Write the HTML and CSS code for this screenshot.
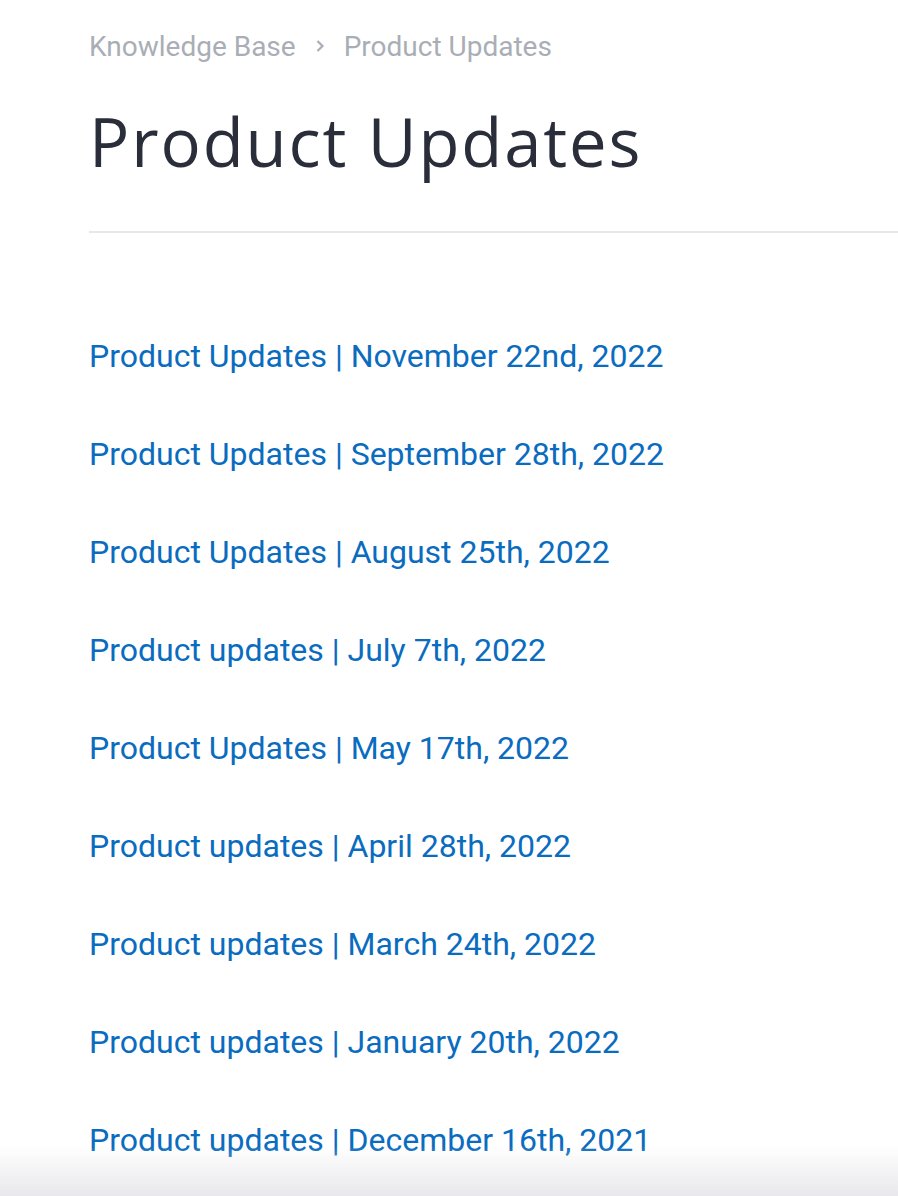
FILE: index.html
```html
<!DOCTYPE html>
<html lang="en">
<head>
    <meta charset="UTF-8">
    <meta name="viewport" content="width=device-width, initial-scale=1.0">
    <title>Product Updates</title>
    <link rel="stylesheet" href="styles.css">
</head>
<body>
    <div class="page">
        <nav class="breadcrumb">
            <a href="#">Knowledge Base</a>
            <svg class="crumb-sep" width="12" height="14" viewBox="0 0 12 14">
                <path d="M3.5 2 L8.5 7 L3.5 12" fill="none" stroke="#a9aeb6" stroke-width="2.2"/>
            </svg>
            <span>Product Updates</span>
        </nav>

        <h1>Product Updates</h1>

        <hr class="divider">

        <ul class="articles">
            <li><a href="#">Product Updates | November 22nd, 2022</a></li>
            <li><a href="#">Product Updates | September 28th, 2022</a></li>
            <li><a href="#">Product Updates | August 25th, 2022</a></li>
            <li><a href="#">Product updates | July 7th, 2022</a></li>
            <li><a href="#">Product Updates | May 17th, 2022</a></li>
            <li><a href="#">Product updates | April 28th, 2022</a></li>
            <li><a href="#">Product updates | March 24th, 2022</a></li>
            <li><a href="#">Product updates | January 20th, 2022</a></li>
            <li><a href="#">Product updates | December 16th, 2021</a></li>
        </ul>
    </div>

    <div class="bottom-fade"></div>
</body>
</html>
```

FILE: styles.css
```css
body {
    margin: 0;
    background: #fff;
    font-family: Roboto, "Liberation Sans", sans-serif;
    overflow: hidden;
}

.page {
    padding: 28px 0 0 89px;
}

.breadcrumb {
    display: flex;
    align-items: center;
    gap: 18px;
    font-size: 28px;
    color: #a9aeb6;
    height: 36px;
}

.breadcrumb a {
    color: inherit;
    text-decoration: none;
}

.crumb-sep {
    display: block;
}

h1 {
    margin: 42px 0 0;
    font-family: "Open Sans", Lato, sans-serif;
    font-weight: 400;
    font-size: 67px;
    line-height: 70px;
    color: #2a2e3b;
    letter-spacing: 1.9px;
}

.divider {
    border: none;
    height: 2px;
    background: #e8e8ec;
    margin: 55px 0 0;
}

.articles {
    list-style: none;
    margin: 0;
    padding: 99px 0 0;
}

.articles li {
    height: 98px;
    line-height: 48px;
}

.articles a {
    color: #0a6cbf;
    text-decoration: none;
    font-size: 32px;
}

.bottom-fade {
    position: fixed;
    left: 0;
    right: 0;
    bottom: 0;
    height: 50px;
    background: linear-gradient(to bottom, rgba(236,236,240,0), rgba(232,232,236,1));
}
```
